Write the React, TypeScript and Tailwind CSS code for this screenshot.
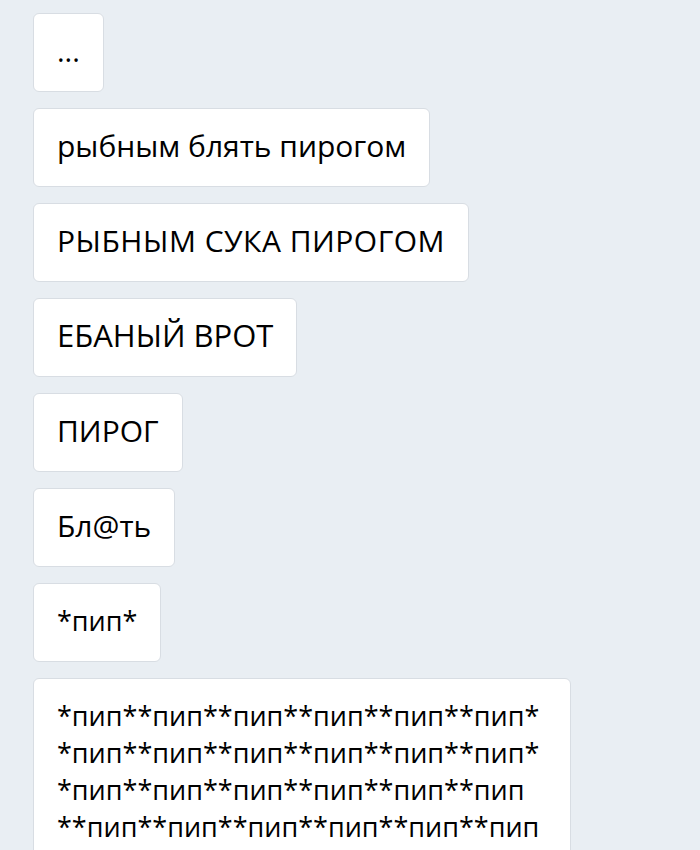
import React from 'react';

const messages = [
  { text: '...', size: 'text-[29px]' },
  { text: 'рыбным блять пирогом', size: 'text-[30px]' },
  { text: 'РЫБНЫМ СУКА ПИРОГОМ', size: 'text-[30px] tracking-[0.5px]' },
  { text: 'ЕБАНЫЙ ВРОТ', size: 'text-[31px]' },
  { text: 'ПИРОГ', size: 'text-[30px]' },
  { text: 'Бл@ть', size: 'text-[30px]' },
  { text: '*пип*', size: 'text-[27px]' },
];

const beepLines = [
  '*пип**пип**пип**пип**пип**пип*',
  '*пип**пип**пип**пип**пип**пип*',
  '*пип**пип**пип**пип**пип**пип',
  '**пип**пип**пип**пип**пип**пип',
];

const Bubble = ({ children, className = '' }: { children: React.ReactNode; className?: string }) => (
  <div
    className={`rounded-md border border-[#d8dde3] bg-white px-[23px] pt-[18px] pb-[22px] leading-[37px] text-black ${className}`}
  >
    {children}
  </div>
);

export default function App() {
  return (
    <div
      className="h-[850px] overflow-hidden bg-[#e9eef3] px-[33px] pt-[13px]"
      style={{ fontFamily: '"Open Sans", "Noto Sans", sans-serif' }}
    >
      <div className="flex flex-col items-start gap-[16px]">
        {messages.map((m, i) => (
          <Bubble key={i} className={m.size}>
            {m.text}
          </Bubble>
        ))}
        <Bubble className="w-[538px] text-[27px] pb-[40px]">
          {beepLines.map((l, i) => (
            <div key={i}>{l}</div>
          ))}
        </Bubble>
      </div>
    </div>
  );
}
